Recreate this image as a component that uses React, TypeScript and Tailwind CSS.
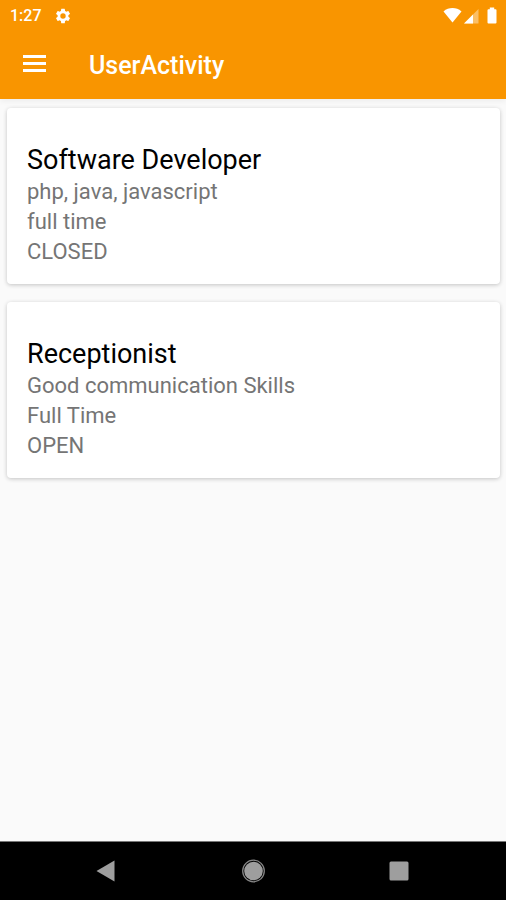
type Job = {
  title: string;
  skills: string;
  schedule: string;
  status: string;
};

const jobs: Job[] = [
  { title: "Software Developer", skills: "php, java, javascript", schedule: "full time", status: "CLOSED" },
  { title: "Receptionist", skills: "Good communication Skills", schedule: "Full Time", status: "OPEN" },
];

function StatusBar() {
  return (
    <div className="flex h-8 items-center justify-between pr-2 pb-px pl-[10px] text-white">
      <div className="flex items-center gap-3">
        <span className="text-[16px] leading-5 font-medium">1:27</span>
        <svg className="size-[18px]" viewBox="0 0 24 24" fill="currentColor" aria-hidden="true">
          <path d="M19.14 12.94c.04-.3.06-.61.06-.94 0-.32-.02-.64-.07-.94l2.03-1.58a.49.49 0 0 0 .12-.61l-1.92-3.32a.49.49 0 0 0-.59-.22l-2.39.96a7.03 7.03 0 0 0-1.62-.94l-.36-2.54a.48.48 0 0 0-.48-.41h-3.84a.47.47 0 0 0-.47.41l-.36 2.54c-.59.24-1.13.57-1.62.94l-2.39-.96a.48.48 0 0 0-.59.22L2.74 8.87a.47.47 0 0 0 .12.61l2.03 1.58c-.05.3-.09.63-.09.94s.02.64.07.94l-2.03 1.58a.49.49 0 0 0-.12.61l1.92 3.32c.12.22.37.29.59.22l2.39-.96c.5.38 1.03.7 1.62.94l.36 2.54c.05.24.24.41.48.41h3.84c.24 0 .44-.17.47-.41l.36-2.54a7 7 0 0 0 1.62-.94l2.39.96c.22.08.47 0 .59-.22l1.92-3.32a.47.47 0 0 0-.12-.61zM12 15.6a3.6 3.6 0 1 1 0-7.2 3.6 3.6 0 0 1 0 7.2z" />
        </svg>
      </div>
      <svg className="h-[18px] w-[56px]" viewBox="0 0 56 18" fill="currentColor" aria-hidden="true">
        <path d="M10.5 15.500 1.500 4.400C4.200 2 7.200 1 10.500 1s6.300 1 9 3.400z" />
        <path d="M36.500 2v14.500H22z" opacity=".4" />
        <path d="M31 7.500v9h-9z" />
        <path d="M47.800 .5h4.400v1.700h1.300q1 0 1 1V15.500q0 1-1 1h-7q-1 0-1-1V3.200q0-1 1-1h1.300z" />
      </svg>
    </div>
  );
}

function AppBar() {
  return (
    <div className="flex h-[67px] items-center gap-[43px] pl-[23px] text-white">
      <button type="button" aria-label="Open menu" className="flex w-[23px] flex-col gap-1 pb-1">
        <span className="h-[3px] w-full bg-current" />
        <span className="h-[3px] w-full bg-current" />
        <span className="h-[3px] w-full bg-current" />
      </button>
      <h1 className="text-[25px] leading-[33px] font-medium">UserActivity</h1>
    </div>
  );
}

function JobCard({ job }: { job: Job }) {
  return (
    <article className="rounded-[4px] bg-white px-5 pt-[35px] pb-[17px] shadow-[0_1px_4px_rgba(0,0,0,0.22)]">
      <h2 className="text-[27px] leading-[34px] font-normal text-black">{job.title}</h2>
      <div className="text-[22px] leading-[30px] font-normal text-[#757575]">
        <p>{job.skills}</p>
        <p>{job.schedule}</p>
        <p>{job.status}</p>
      </div>
    </article>
  );
}

function NavigationBar() {
  return (
    <nav className="flex h-[59px] items-center justify-around border-t border-[#777777] bg-black px-[34px] text-[#9e9e9e]">
      <button type="button" aria-label="Back" className="p-2">
        <svg className="size-6" viewBox="0 0 24 24" fill="currentColor" aria-hidden="true">
          <path d="M19.500 1.500v21L1.500 12z" />
        </svg>
      </button>
      <button type="button" aria-label="Home" className="p-2">
        <svg className="size-6" viewBox="0 0 24 24" fill="currentColor" aria-hidden="true">
          <circle cx="12.500" cy="12" r="9.300" />
          <circle cx="12.500" cy="12" r="10.800" fill="none" stroke="#858585" strokeWidth="1.300" />
        </svg>
      </button>
      <button type="button" aria-label="Recent apps" className="p-2">
        <svg className="size-6" viewBox="0 0 24 24" fill="currentColor" aria-hidden="true">
          <rect x="2.500" y="2.500" width="19" height="19" rx="1.500" />
        </svg>
      </button>
    </nav>
  );
}

export default function App() {
  return (
    <div className="flex min-h-screen flex-col bg-[#fafafa] font-['Roboto',sans-serif]">
      <header className="bg-[#f99500] shadow-[0_2px_6px_rgba(0,0,0,0.06)]">
        <StatusBar />
        <AppBar />
      </header>
      <main className="flex flex-1 flex-col gap-[18px] pt-[9px] pr-[6px] pl-[7px]">
        {jobs.map((job) => (
          <JobCard key={job.title} job={job} />
        ))}
      </main>
      <NavigationBar />
    </div>
  );
}
